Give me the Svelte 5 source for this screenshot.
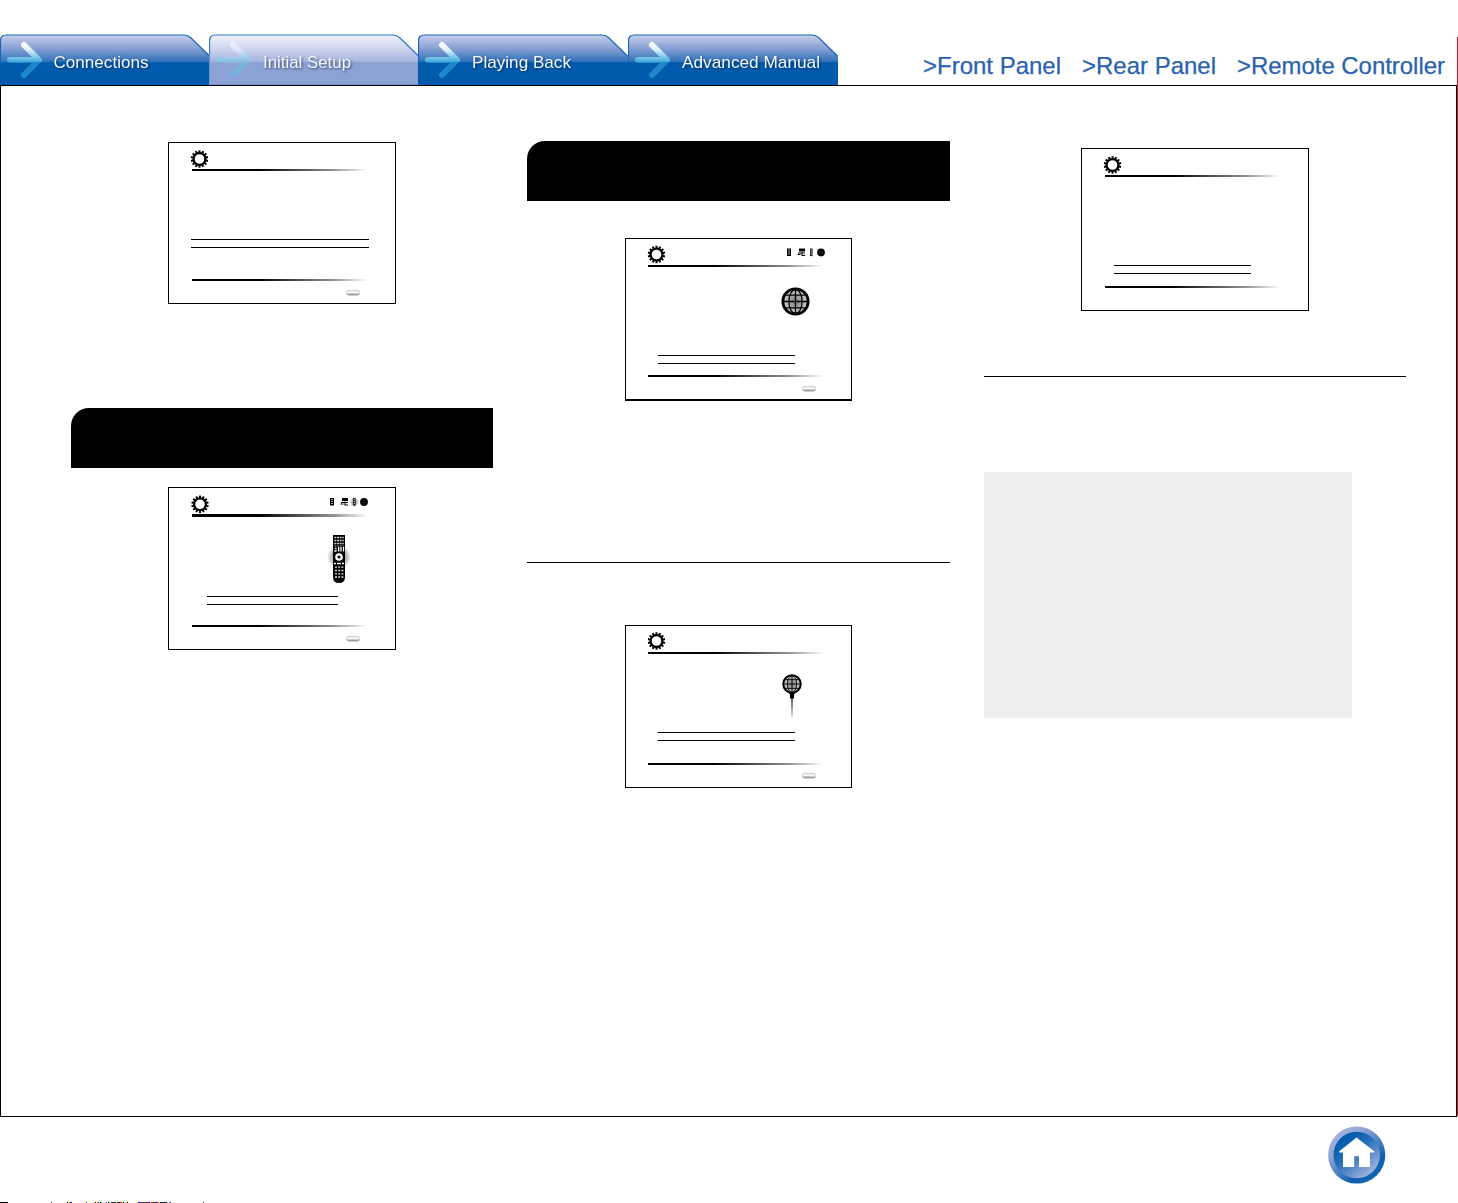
<script>
  const tabs = [
    { label: 'Connections', x: 53.5, w: 95 },
    { label: 'Initial Setup', x: 54, w: 88, active: true },
    { label: 'Playing Back', x: 54, w: 99 },
    { label: 'Advanced Manual', x: 54, w: 138 }
  ];
  const links = [
    { label: '>Front Panel', w: 138 },
    { label: '>Rear Panel', w: 134 },
    { label: '>Remote Controller', w: 208 }
  ];
  const teeth = Array.from({ length: 14 }, (_, i) => (i * 360) / 14);
  // Marks along the bottom edge: [start, length, colour]
  const marks = [
    [0, 8, '#000'], [51, 1, '#222'], [67, 1, '#000'], [69, 1, '#dd4'], [70, 2, '#118'],
    [85, 1, '#dd6'], [86, 1, '#22f'], [94, 1, '#dd0'], [95, 1, '#000'], [97, 1, '#e72'], [98, 1, '#22f'],
    [100, 1, '#000'], [101, 1, '#2cc'], [106, 1, '#36f'], [108, 1, '#000'], [109, 1, '#3dd'], [111, 5, '#142'],
    [117, 1, '#822'], [118, 2, '#000'], [120, 2, '#d22'], [122, 1, '#dd2'], [123, 1, '#000'], [126, 1, '#dd0'],
    [127, 1, '#000'], [137, 1, '#dd4'], [138, 3, '#11b'], [141, 2, '#a22'], [143, 3, '#146'], [146, 2, '#b12'],
    [148, 2, '#119'], [151, 3, '#a22'], [154, 3, '#126'], [157, 2, '#c31'], [160, 7, '#124'], [169, 1, '#c3c'],
    [170, 1, '#22f'], [203, 1, '#220']
  ];
</script>

{#snippet tab(t)}
  <svg class="tab" viewBox="0 0 210 51">
    <path d="M0 51V7Q0 .8 6.5 .8H184Q188 .8 191 4L210 22V51Z" fill={t.active ? 'url(#tabOn)' : 'url(#tabOff)'} />
    <path d="M.5 28V7Q.5 1 6.5 1H184Q188 1 191 4L209.5 22" fill="none" stroke={t.active ? '#2f78c2' : '#1b68b5'} stroke-width="1.2" />
    {#if t.active}<path d="M.5 20V50.5H209" fill="none" stroke="#6f98d2" />{/if}
    <g opacity={t.active ? 0.55 : 1} fill="none" stroke={t.active ? 'url(#arrowOn)' : 'url(#arrow)'} stroke-width="6" stroke-linecap="round" stroke-linejoin="round">
      <path d="M10 26H36M24 11L39 26L24 41" />
    </g>
    <text x={t.x} y="33.5" textLength={t.w} lengthAdjust="spacingAndGlyphs">{t.label}</text>
  </svg>
{/snippet}

{#snippet gear(x, y)}
  <g transform="translate({x} {y})">
    <circle r="5.9" fill="none" stroke="#000" stroke-width="2.2" />
    {#each teeth as a}
      <rect x="-1" y="-8.7" width="2" height="2.8" transform="rotate({a})" />
    {/each}
  </g>
{/snippet}

{#snippet globe(x, y, r)}
  <g transform="translate({x} {y}) scale({r / 14})">
    <circle r="12.6" fill="url(#globeFill)" stroke="#000" stroke-width="2.9" />
    <path d="M-12 0H12M0-12V12M-10-6.3H10M-10 6.3H10" fill="none" stroke="#000" stroke-width="1.3" />
    <ellipse rx="6.6" ry="12" fill="none" stroke="#000" stroke-width="1.3" />
  </g>
{/snippet}

{#snippet pill(x, y)}
  <rect x={x + 0.3} y={y + 0.4} width="13.6" height="4.8" rx="2.4" fill="url(#pill)" stroke="#aaa" stroke-width=".5" />
{/snippet}

{#snippet minis(x, y, glow)}
  <g transform="translate({x} {y})">
    <rect x="0" y="0" width="4" height="7.5" />
    <path d="M1.3 1.5H2.7M1.3 3.5H2.7M1.3 5.5H2.7" stroke="#fff" stroke-width=".9" />
    <path d="M12 0H18V3H12Z" />
    <path d="M11 4.5H18M10.5 6H13.5M15 3.5V7M14.5 7H18" fill="none" stroke="#000" stroke-width="1" />
    {#if glow}<ellipse cx="24.3" cy="4" rx="4.2" ry="5" fill="url(#glow)" />{/if}
    <rect x="23" y="0" width="2.6" height="7.6" fill="#222" />
    <path d="M24.3 1V7" stroke="#fff" stroke-dasharray="1 1" stroke-width=".8" />
    <circle cx="34" cy="4" r="3.9" />
    <path d="M31.5 4H36.5M34 1.5V6.5" stroke="#333" stroke-width=".5" />
  </g>
{/snippet}

{#snippet base(w, h, gx, gy, x0, ty, th, by)}
  <rect x=".5" y=".5" width={w - 1} height={h - 1} fill="#fff" stroke="#000" />
  {@render gear(gx, gy)}
  <rect x={x0} y={ty} width="176" height={th} fill="url(#fade)" />
  <rect x={x0} y={by} width="176" height="2" fill="url(#fade)" />
{/snippet}

<svg class="defs" width="0" height="0">
  <defs>
    <linearGradient id="tabOff" x1="0" y1="0" x2="0" y2="51" gradientUnits="userSpaceOnUse">
      <stop offset="0" stop-color="#cdd2ec" /><stop offset=".3" stop-color="#829dd2" />
      <stop offset=".55" stop-color="#2c70b9" /><stop offset=".56" stop-color="#005bac" /><stop offset="1" stop-color="#005bac" />
    </linearGradient>
    <linearGradient id="tabOn" x1="0" y1="0" x2="0" y2="51" gradientUnits="userSpaceOnUse">
      <stop offset="0" stop-color="#f3f5fc" /><stop offset=".3" stop-color="#cdd3ed" />
      <stop offset=".55" stop-color="#a3b2dd" /><stop offset=".56" stop-color="#8ca2d5" /><stop offset="1" stop-color="#8ca2d5" />
    </linearGradient>
    <linearGradient id="arrow" x1="0" y1="8" x2="0" y2="44" gradientUnits="userSpaceOnUse">
      <stop offset="0" stop-color="#fff" /><stop offset=".2" stop-color="#e4f4fc" />
      <stop offset=".56" stop-color="#3ba9dc" /><stop offset=".57" stop-color="#1b87ca" /><stop offset="1" stop-color="#1f8acb" />
    </linearGradient>
    <linearGradient id="arrowOn" x1="0" y1="8" x2="0" y2="44" gradientUnits="userSpaceOnUse">
      <stop offset="0" stop-color="#fff" /><stop offset=".2" stop-color="#ecf8fd" />
      <stop offset=".56" stop-color="#6cc4e8" /><stop offset="1" stop-color="#5cb8e6" />
    </linearGradient>
    <linearGradient id="fade">
      <stop offset="0" /><stop offset=".38" /><stop offset=".6" stop-color="#514c4d" />
      <stop offset=".8" stop-color="#929292" /><stop offset="1" stop-color="#fff" />
    </linearGradient>
    <linearGradient id="pill" x2="0" y2="1">
      <stop offset="0" stop-color="#ddd" /><stop offset=".4" stop-color="#fff" /><stop offset="1" stop-color="#808080" />
    </linearGradient>
    <radialGradient id="globeFill"><stop offset="0" stop-color="#777" /><stop offset="1" stop-color="#d4d4d4" /></radialGradient>
    <radialGradient id="glow"><stop offset="0" stop-color="#888" /><stop offset=".6" stop-color="#b4b4b4" /><stop offset="1" stop-color="#fff" /></radialGradient>
    <linearGradient id="needle" x2="0" y2="1"><stop offset="0" stop-color="#333" /><stop offset="1" stop-color="#ddd" /></linearGradient>
    <linearGradient id="homeRim" x1="0" y1="0" x2=".8" y2="1">
      <stop offset="0" stop-color="#b4bfe2" /><stop offset=".35" stop-color="#8ea4d4" /><stop offset=".8" stop-color="#0c60b0" /><stop offset="1" stop-color="#1767b4" />
    </linearGradient>
    <linearGradient id="homeFace" x1="0" y1="0" x2=".8" y2="1">
      <stop offset=".2" stop-color="#005bac" /><stop offset=".5" stop-color="#2a70ba" /><stop offset="1" stop-color="#b0bce1" />
    </linearGradient>
  </defs>
</svg>

<div class="page">
  <div class="sheet">
    <header>
      <nav class="tabs">{#each tabs as t}{@render tab(t)}{/each}</nav>
      <nav class="links">
        {#each links as l}
          <svg width={l.w} height="30"><text x="0" y="22.8" textLength={l.w} lengthAdjust="spacingAndGlyphs">{l.label}</text></svg>
        {/each}
      </nav>
    </header>
    <main>
      <section class="col first">
        <svg class="screen" width="228" height="162">
          {@render base(228, 162, 31.5, 17, 24, 27, 2, 137)}
          <path d="M23 97.5H201M23 105.5H201" stroke="#000" />
          {@render pill(178, 148)}
        </svg>
        <div class="banner"></div>
        <svg class="screen" width="228" height="163">
          {@render base(228, 163, 32, 17.3, 24, 27, 3, 138)}
          {@render minis(162, 11, true)}
          <ellipse cx="171" cy="70" rx="12" ry="12" fill="url(#glow)" />
          <path d="M165 48H177V90Q177 96 171 96Q165 96 165 90Z" />
          <path d="M166.3 50.5H175.8M166.3 53.5H175.8M166.3 56.5H175.8" stroke="#ccc" stroke-width="1.6" stroke-dasharray="2 .7" />
          <path d="M166.3 59H175.8" stroke="#999" stroke-width="1" stroke-dasharray="2 .7" />
          <path d="M167 61.5H168.6M166.3 64H168.6M170.7 60V64.5M173 60V64.5M175.5 60V64.5" stroke="#fff" stroke-width="1.3" />
          <circle cx="171" cy="70" r="2.7" fill="none" stroke="#fff" stroke-width="2.2" />
          <path d="M166 76.5H176" stroke="#fff" stroke-width="1.5" stroke-dasharray="2 1 4 1 2" />
          <path d="M167 80.2H176M167 83.5H176M167 86.8H176M167 90H176" stroke="#ddd" stroke-width="1.3" stroke-dasharray="2 1.2" />
          <path d="M39 109.5H170M39 117.5H170" stroke="#000" />
          {@render pill(178, 149)}
        </svg>
      </section>
      <section class="col second">
        <div class="banner"></div>
        <svg class="screen" width="227" height="163">
          {@render base(227, 163, 31.5, 16.5, 23, 27, 2, 137)}
          <path d="M0 162H227" stroke="#000" stroke-width="2" />
          {@render minis(162, 10.5, false)}
          {@render globe(170.5, 63.5, 14)}
          <path d="M33 117.5H170M33 125.5H170" stroke="#000" />
          {@render pill(177, 148)}
        </svg>
        <div class="rule"></div>
        <svg class="screen" width="227" height="163">
          {@render base(227, 163, 31.5, 16, 23, 27, 2, 138)}
          <path d="M166.2 73H167.8V93H166.2Z" fill="url(#needle)" />
          <path d="M163.5 67H170.5L169 70V73.5H165V70Z" />
          {@render globe(167, 59, 9.7)}
          <path d="M32.5 107.5H170M32.5 115.5H170" stroke="#000" />
          {@render pill(177, 148)}
        </svg>
      </section>
      <section class="col third">
        <svg class="screen" width="228" height="163">
          {@render base(228, 163, 31.5, 17, 24, 27, 2, 138)}
          <path d="M33 117.5H170M33 125.5H170" stroke="#000" />
        </svg>
        <div class="rule"></div>
        <div class="note"></div>
      </section>
    </main>
    <footer>
      <svg class="home" width="58" height="58" viewBox="0 0 58 58">
        <circle cx="28.7" cy="29" r="28.6" fill="url(#homeRim)" />
        <circle cx="28.7" cy="29" r="23.2" fill="url(#homeFace)" />
        <path d="M28.5 11.5L11 25.5V26.5H15V41H26.2V30.2H31V41H42V26.5H46.5V25.5Z" fill="#fff" />
      </svg>
      <svg class="marks" width="240" height="1">
        {#each marks as m}<rect x={m[0]} y="0" width={m[1]} height="1" fill={m[2]} />{/each}
      </svg>
    </footer>
  </div>
  <div class="edge"></div>
</div>

<style>
  :global(body) { margin: 0; background: #fff; overflow: hidden; }
  svg { display: block; flex: none; }
  .defs { position: absolute; }
  .page { display: flex; width: 1458px; height: 1203px; font-family: "Liberation Sans", Arial, sans-serif; }
  .sheet { display: flex; flex-direction: column; width: 1457px; }
  .edge { width: 1px; height: 1079px; margin-top: 37px; background: #c41230; }
  header { display: flex; height: 85px; align-items: flex-end; }
  .tabs { display: grid; grid-template-columns: 209px 209px 210px 210px; height: 51px; }
  .tab { width: 210px; height: 51px; }
  .tab text { font-size: 17px; fill: #f6f7fa; filter: drop-shadow(1px 1px .8px rgba(0, 20, 60, .6)); }
  .links { display: flex; gap: 21px; padding: 0 0 4px 85px; }
  .links text { font-size: 24px; fill: #2b62ae; stroke: #2b62ae; stroke-width: .25px; }
  main { display: flex; box-sizing: border-box; height: 1032px; border: 1px solid #000; padding-left: 70px; gap: 34px; }
  .col { display: flex; flex-direction: column; width: 422px; }
  .second { width: 423px; }
  .banner { height: 60px; background: #000; border-top-left-radius: 18px; }
  .screen { margin-left: 97px; }
  .first { padding-top: 56px; }
  .first .banner { margin: 104px 0 19px; }
  .second { padding-top: 55px; }
  .second .screen { margin-left: 98px; margin-top: 37px; }
  .second .rule { margin-top: 161px; }
  .second .rule + .screen { margin-top: 62px; }
  .third { padding-top: 62px; }
  .rule { height: 1px; background: #000; }
  .third .rule { margin-top: 65px; }
  .note { width: 368px; height: 246px; margin-top: 95px; background: #eee; }
  footer { display: flex; flex-direction: column; height: 86px; }
  .home { margin: 9px 0 18px 1328px; }
</style>
